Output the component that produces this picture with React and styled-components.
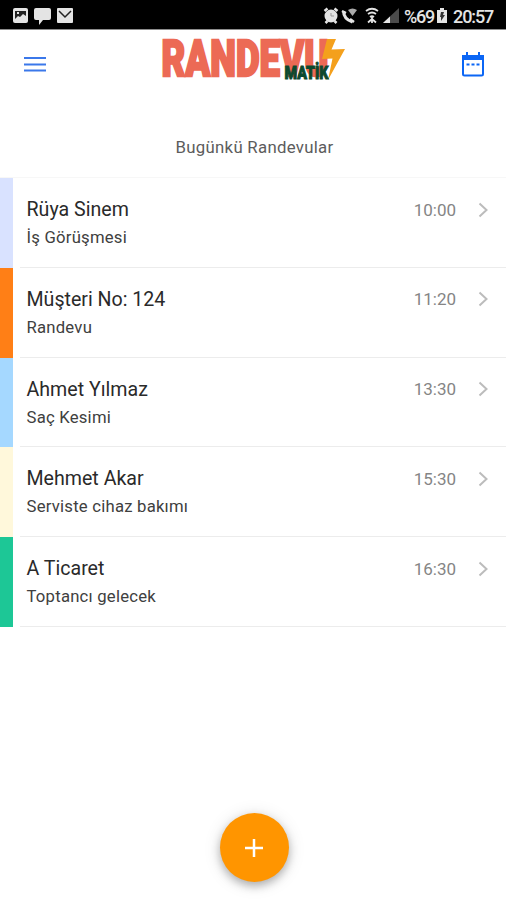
import React from "react";
import styled, { createGlobalStyle } from "styled-components";

const GlobalStyle = createGlobalStyle`
  * {
    box-sizing: border-box;
  }
  body {
    margin: 0;
    background: #fff;
    font-family: Roboto, "Noto Sans", sans-serif;
  }
`;

const Screen = styled.div`
  display: flex;
  flex-direction: column;
  height: 900px;
  overflow: hidden;
  background: #fff;
`;

const StatusBar = styled.header`
  display: flex;
  justify-content: space-between;
  height: 30px;
  padding: 0 12px 0 11px;
  background: #000;
  border-bottom: 1px solid #8c8c8c;
  color: #e4e4e4;
`;

const StatusIcons = styled.svg`
  display: block;
  height: 29px;
`;

const StatusRight = styled.div`
  display: flex;
`;

const StatusText = styled.span`
  width: ${(props) => props.$width}px;
  padding-top: 3px;
  font-size: 18px;
  font-weight: 500;
  line-height: 27px;
  letter-spacing: ${(props) => props.$spacing || 0}px;
  white-space: nowrap;
`;

const TopBar = styled.nav`
  display: flex;
  justify-content: space-between;
  height: 90px;
  padding: 0 21px 0 24px;
`;

const IconButton = styled.button`
  width: ${(props) => props.$width}px;
  height: 70px;
  padding: 0;
  border: 0;
  background: none;
  svg {
    display: block;
  }
`;

const Logo = styled.svg`
  display: block;
  width: 190px;
  height: 60px;
  margin-left: 3px;
`;

const ListTitle = styled.h1`
  height: 58px;
  margin: 0;
  padding-left: 3px;
  border-bottom: 1px solid #f7f7f7;
  color: #5c5c5c;
  font-size: 16.8px;
  font-weight: 400;
  line-height: 55px;
  letter-spacing: 0.28px;
  text-align: center;
`;

const List = styled.ul`
  margin: 0;
  padding: 0;
  list-style: none;
`;

const Item = styled.li`
  display: flex;
  height: 89.75px;
`;

const ColorTag = styled.span`
  width: 13px;
  background: ${(props) => props.$color};
`;

const ItemBody = styled.div`
  display: flex;
  flex: 1;
  justify-content: space-between;
  margin-left: 7px;
  padding: 18px 18px 0 6.5px;
  border-bottom: 1px solid #ececec;
`;

const Name = styled.h2`
  margin: 0;
  color: #2a2a2a;
  font-size: 19.6px;
  font-weight: 400;
  line-height: 28px;
`;

const Note = styled.p`
  margin: 2px 0 0;
  color: #404040;
  font-size: 16.7px;
  line-height: 24px;
  letter-spacing: 0.22px;
`;

const Meta = styled.div`
  display: flex;
  align-items: center;
  height: 27px;
  color: #858585;
  font-size: 17px;
`;

const Chevron = styled.svg`
  width: 12px;
  height: 18px;
  margin-left: 20px;
`;

const Footer = styled.footer`
  display: flex;
  justify-content: center;
  margin-top: auto;
  padding: 0 0 18px 2px;
`;

const AddButton = styled.button`
  display: flex;
  align-items: center;
  justify-content: center;
  width: 69px;
  height: 69px;
  padding: 0;
  border: 0;
  border-radius: 50%;
  background: #ff9500;
  box-shadow: 0 4px 8px rgba(0, 0, 0, 0.26), 0 2px 18px rgba(0, 0, 0, 0.12);
`;

const appointments = [
  { name: "Rüya Sinem", note: "İş Görüşmesi", time: "10:00", color: "#d9e2ff" },
  { name: "Müşteri No: 124", note: "Randevu", time: "11:20", color: "#ff7f16" },
  { name: "Ahmet Yılmaz", note: "Saç Kesimi", time: "13:30", color: "#a5d8ff" },
  { name: "Mehmet Akar", note: "Serviste cihaz bakımı", time: "15:30", color: "#fff8db" },
  { name: "A Ticaret", note: "Toptancı gelecek", time: "16:30", color: "#1dc796" },
];

function Notifications() {
  return (
    <StatusIcons width="66" viewBox="0 0 66 29">
      <rect x="2" y="8" width="15" height="15" rx="2" fill="#e4e4e4" />
      <path d="M4 11h11v5l-3-2-3 3-2-1-3 3z" fill="#222" />
      <path d="M6 12h2v2H6z" fill="#e4e4e4" />
      <path d="M25 8h13q2 0 2 2v8q0 2-2 2h-6l-4 5v-5h-3q-2 0-2-2v-8q0-2 2-2z" fill="#e4e4e4" />
      <rect x="46" y="8" width="16" height="15" rx="1" fill="#e4e4e4" />
      <path d="M48 11l6 6 6-6" fill="none" stroke="#222" strokeWidth="1.5" />
    </StatusIcons>
  );
}

function DeviceStatus() {
  return (
    <StatusIcons width="81" viewBox="0 0 81 29">
      <g fill="none" stroke="#e4e4e4">
        <circle cx="8" cy="16" r="5.5" fill="#e4e4e4" strokeWidth="2" />
        <path d="M1.5 11l3-2.5M14.5 11l-3-2.5M2.500 23l2-2M13.500 23l-2-2" strokeWidth="2.500" />
        <path d="M8 13v3h3" stroke="#999" />
        <path d="M20.5 11q0 8 9 11" strokeWidth="3" />
        <path d="M19 11l4 2M27 19l4 3" strokeWidth="2.500" />
      </g>
      <path d="M25 10q4.500-3 9 0l-4.500 6z" fill="#aaa" />
      <g fill="none" stroke="#e4e4e4">
        <path d="M43 11q6-4.5 12 0M45 14q4-3 8 0M47 17q2-1.5 4 0" strokeWidth="1.8" />
        <path d="M49 17v6M45 22.500l4-3.500 4 3.500" strokeWidth="1.8" />
      </g>
      <path d="M60 23L76 8v15z" fill="#4b4b4b" />
      <path d="M60 23l7-6.5V23z" fill="#e4e4e4" />
    </StatusIcons>
  );
}

function Battery() {
  return (
    <StatusIcons width="17" viewBox="0 0 17 29">
      <path d="M4 8h4v2h3v13H1V10h3z" fill="#e4e4e4" />
      <path d="M5 12h3l-1 3h2l-4 6v-4H4z" fill="#333" />
    </StatusIcons>
  );
}

function BrandLogo() {
  return (
    <Logo viewBox="160 30 190 60">
      <text
        x="160.5"
        y="76"
        fill="#ec6a55"
        stroke="#ec6a55"
        strokeWidth="2.4"
        fontFamily="Roboto, sans-serif"
        fontSize="49.5"
        fontWeight="900"
        textLength="167"
        lengthAdjust="spacingAndGlyphs"
      >
        RANDEVU
      </text>
      <path d="M326 39h9l-4.500 10.500 13.500-.5-17 31 4.500-21.500-10.500.5z" fill="#f4a01c" />
      <text
        x="283.5"
        y="79.3"
        fill="#0c492f"
        stroke="#0c492f"
        strokeWidth="1"
        fontFamily="Roboto, sans-serif"
        fontSize="18.500"
        fontWeight="900"
        textLength="44"
        lengthAdjust="spacingAndGlyphs"
      >
        MATİK
      </text>
    </Logo>
  );
}

function Appointment({ name, note, time, color }) {
  return (
    <Item>
      <ColorTag $color={color} />
      <ItemBody>
        <div>
          <Name>{name}</Name>
          <Note>{note}</Note>
        </div>
        <Meta>
          {time}
          <Chevron viewBox="0 0 12 18">
            <path d="M3.500 2.500L10.500 9l-7 6.500" fill="none" stroke="#bcbcbc" strokeWidth="2" />
          </Chevron>
        </Meta>
      </ItemBody>
    </Item>
  );
}

export default function App() {
  return (
    <Screen>
      <GlobalStyle />
      <StatusBar>
        <Notifications />
        <StatusRight>
          <DeviceStatus />
          <StatusText $width={32} $spacing={-1.2}>%69</StatusText>
          <Battery />
          <StatusText $width={41} $spacing={-1.1}>20:57</StatusText>
        </StatusRight>
      </StatusBar>
      <TopBar>
        <IconButton $width={23} aria-label="Menü">
          <svg width="23" height="70" viewBox="0 0 23 70">
            <path d="M0 28h22M0 34.500h22M0 40.500h22" stroke="#3b78ea" strokeWidth="2.200" />
          </svg>
        </IconButton>
        <BrandLogo />
        <IconButton $width={24} aria-label="Takvim">
          <svg width="24" height="70" viewBox="0 0 24 70">
            <rect x="2" y="26" width="20" height="19.500" rx="1.5" fill="none" stroke="#0b66f5" strokeWidth="2" />
            <path d="M1 25h22v5H1zM5 22h2v4H5zM17 22h2v4h-2z" fill="#0b66f5" />
            <path d="M5.500 34.500h3M10.500 34.500h3M15.500 34.500h3" stroke="#0b66f5" strokeWidth="2" />
          </svg>
        </IconButton>
      </TopBar>
      <ListTitle>Bugünkü Randevular</ListTitle>
      <List>
        {appointments.map((item) => (
          <Appointment key={item.time} {...item} />
        ))}
      </List>
      <Footer>
        <AddButton aria-label="Ekle">
          <svg width="20" height="20" viewBox="0 0 20 20">
            <path d="M1 10h18M10 1v18" stroke="#fff" strokeWidth="2.500" />
          </svg>
        </AddButton>
      </Footer>
    </Screen>
  );
}
